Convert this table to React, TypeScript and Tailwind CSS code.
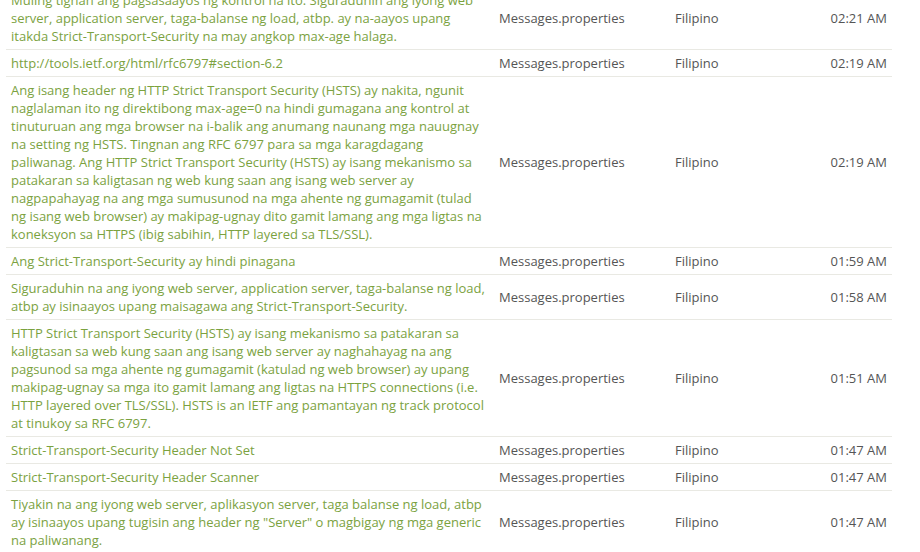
const rows = [
  {
    text: "Muling tignan ang pagsasaayos ng kontrol na ito. Siguraduhin ang iyong web server, application server, taga-balanse ng load, atbp. ay na-aayos upang itakda Strict-Transport-Security na may angkop max-age halaga.",
    time: "02:21 AM",
  },
  { text: "http://tools.ietf.org/html/rfc6797#section-6.2", time: "02:19 AM" },
  {
    text: "Ang isang header ng HTTP Strict Transport Security (HSTS) ay nakita, ngunit naglalaman ito ng direktibong max-age=0 na hindi gumagana ang kontrol at tinuturuan ang mga browser na i-balik ang anumang naunang mga nauugnay na setting ng HSTS. Tingnan ang RFC 6797 para sa mga karagdagang paliwanag. Ang HTTP Strict Transport Security (HSTS) ay isang mekanismo sa patakaran sa kaligtasan ng web kung saan ang isang web server ay nagpapahayag na ang mga sumusunod na mga ahente ng gumagamit (tulad ng isang web browser) ay makipag-ugnay dito gamit lamang ang mga ligtas na koneksyon sa HTTPS (ibig sabihin, HTTP layered sa TLS/SSL).",
    time: "02:19 AM",
  },
  { text: "Ang Strict-Transport-Security ay hindi pinagana", time: "01:59 AM" },
  {
    text: "Siguraduhin na ang iyong web server, application server, taga-balanse ng load, atbp ay isinaayos upang maisagawa ang Strict-Transport-Security.",
    time: "01:58 AM",
  },
  {
    text: "HTTP Strict Transport Security (HSTS) ay isang mekanismo sa patakaran sa kaligtasan sa web kung saan ang isang web server ay naghahayag na ang pagsunod sa mga ahente ng gumagamit (katulad ng web browser) ay upang makipag-ugnay sa mga ito gamit lamang ang ligtas na HTTPS connections (i.e. HTTP layered over TLS/SSL). HSTS is an IETF ang pamantayan ng track protocol at tinukoy sa RFC 6797.",
    time: "01:51 AM",
  },
  { text: "Strict-Transport-Security Header Not Set", time: "01:47 AM" },
  { text: "Strict-Transport-Security Header Scanner", time: "01:47 AM" },
  {
    text: 'Tiyakin na ang iyong web server, aplikasyon server, taga balanse ng load, atbp ay isinaayos upang tugisin ang header ng "Server" o magbigay ng mga generic na paliwanang.',
    time: "01:47 AM",
  },
];

export default function App() {
  return (
    <div className="w-[920px] h-[552px] overflow-hidden bg-white font-['Open_Sans',sans-serif] text-[13px] leading-[18px]">
      <div className="mt-[-13px] pl-[6px] w-[892px]">
        <table className="w-[886px] table-fixed border-collapse">
          <colgroup>
            <col className="w-[487px]" />
            <col className="w-[177px]" />
            <col className="w-[110px]" />
            <col className="w-[112px]" />
          </colgroup>
          <tbody>
            {rows.map((r, i) => (
              <tr key={i} className="border-b border-[#e9e9e3]">
                <td className="px-[5px] py-[4px] align-middle text-[#7ba23f]">{r.text}</td>
                <td className="px-[6px] py-[4px] align-middle text-[#555]">Messages.properties</td>
                <td className="px-[5px] py-[4px] align-middle text-[#555]">Filipino</td>
                <td className="pl-[6px] pr-[5px] py-[4px] align-middle text-right text-[#555]">{r.time}</td>
              </tr>
            ))}
          </tbody>
        </table>
      </div>
    </div>
  );
}
